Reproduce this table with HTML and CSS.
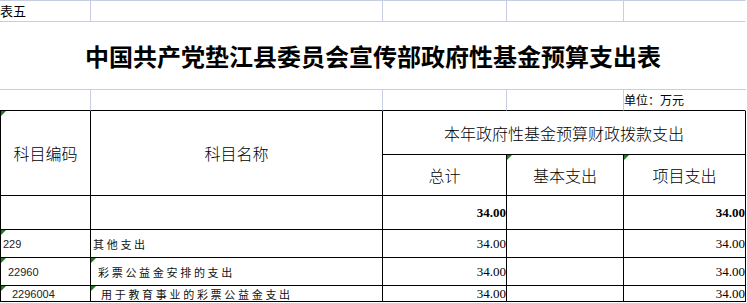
FILE: index.html
```html
<!DOCTYPE html>
<html lang="zh-CN">
<head>
<meta charset="utf-8">
<title>政府性基金预算支出表</title>
<link rel="stylesheet" href="styles.css">
</head>
<body>
<table class="sheet">
  <colgroup>
    <col class="c1"><col class="c2"><col class="c3"><col class="c4"><col class="c5">
  </colgroup>
  <tr class="r-top">
    <td class="g label">表五</td><td class="g"></td><td class="g"></td><td class="g"></td><td class="g end"></td>
  </tr>
  <tr class="r-title">
    <td colspan="5" class="title">中国共产党垫江县委员会宣传部政府性基金预算支出表</td>
  </tr>
  <tr class="r-unit">
    <td class="u"></td><td class="u"></td><td class="u"></td><td class="u"></td><td class="u end unit">单位：万元</td>
  </tr>
  <tr class="r-h1">
    <td rowspan="2" class="b first h mark">科目编码</td>
    <td rowspan="2" class="b h">科目名称</td>
    <td colspan="3" class="b h">本年政府性基金预算财政拨款支出</td>
  </tr>
  <tr class="r-h2">
    <td class="b h">总计</td>
    <td class="b h mark">基本支出</td>
    <td class="b h mark">项目支出</td>
  </tr>
  <tr class="r-sum">
    <td class="b first"></td><td class="b"></td>
    <td class="b num n-total strong">34.00</td><td class="b"></td>
    <td class="b num n-proj strong">34.00</td>
  </tr>
  <tr class="r-row">
    <td class="b first code mark lv0">229</td>
    <td class="b name lv0">其他支出</td>
    <td class="b num n-total">34.00</td><td class="b"></td>
    <td class="b num n-proj">34.00</td>
  </tr>
  <tr class="r-row">
    <td class="b first code mark lv1">22960</td>
    <td class="b name mark lv1">彩票公益金安排的支出</td>
    <td class="b num n-total">34.00</td><td class="b"></td>
    <td class="b num n-proj">34.00</td>
  </tr>
  <tr class="r-last">
    <td class="b first code mark lv2">2296004</td>
    <td class="b name mark lv2">用于教育事业的彩票公益金支出</td>
    <td class="b num n-total">34.00</td><td class="b"></td>
    <td class="b num n-proj">34.00</td>
  </tr>
</table>
</body>
</html>
```

FILE: styles.css
```css
html, body {
  margin: 0;
  padding: 0;
  background: #ffffff;
}

.sheet {
  border-collapse: separate;
  border-spacing: 0;
  table-layout: fixed;
  width: 746px;
  font-family: "Noto Sans CJK SC", "Liberation Sans", sans-serif;
  color: #000;
}

.c1 { width: 91px; }
.c2 { width: 292px; }
.c3 { width: 124px; }
.c4 { width: 117px; }
.c5 { width: 122px; }

.sheet td {
  padding: 0;
  line-height: 14px;
  vertical-align: middle;
  white-space: nowrap;
  overflow: hidden;
}

/* row heights (border-box) */
.r-top { height: 22px; }
.r-title { height: 68px; }
.r-unit { height: 21px; }
.r-h1 { height: 44px; }
.r-h2 { height: 41px; }
.r-sum { height: 34px; }
.r-row { height: 28px; }
.r-last { height: 16px; }

/* light gridlines in the top area */
.g {
  border-top: 1px solid #c6cedf;
  border-right: 1px solid #c6cedf;
  border-bottom: 1px solid #c6cedf;
}
.u {
  border-right: 1px solid #c6cedf;
  border-bottom: 1px solid #000;
}
.sheet td.end {
  border-right: 1px solid transparent;
}

.label {
  font-size: 13px;
  padding-left: 3px;
}

.title {
  border-bottom: 1px solid #c6cedf;
  text-align: center;
  font-size: 24px;
  font-weight: 700;
  line-height: 30px;
  padding-top: 2px;
}

.unit {
  font-size: 12px;
  padding-left: 2px;
  padding-top: 2px;
}

/* black bordered body */
.b {
  border-right: 1px solid #000;
  border-bottom: 1px solid #000;
}
.first {
  border-left: 1px solid #000;
}

.h {
  text-align: center;
  font-size: 16px;
  font-weight: 300;
  line-height: 20px;
}

.num {
  text-align: right;
  font-family: "Liberation Serif", serif;
  font-size: 13px;
}
.n-total { padding-right: 4px; }
.n-proj { padding-right: 1px; }
.strong { font-weight: 700; }

.code {
  font-family: "Liberation Sans", sans-serif;
  font-size: 11px;
  color: #222;
}
.code.lv0 { padding-left: 2px; }
.code.lv1 { padding-left: 7px; }
.code.lv2 { padding-left: 11px; }

.name {
  font-size: 11px;
  letter-spacing: 2.7px;
  color: #111;
}
.name.lv0 { padding-left: 2px; }
.name.lv1 { padding-left: 7px; }
.name.lv2 { padding-left: 10px; }

/* Excel-style green corner markers */
.mark {
  position: relative;
}
.mark::before {
  content: "";
  position: absolute;
  top: 0;
  left: 0;
  width: 0;
  height: 0;
  border-top: 5px solid #1e7b1e;
  border-right: 5px solid transparent;
}
```
